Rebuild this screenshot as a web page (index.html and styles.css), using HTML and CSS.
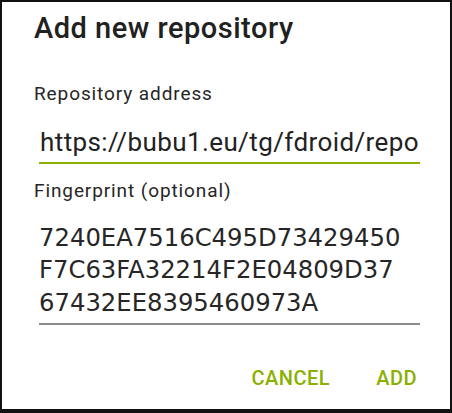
FILE: index.html
```html
<!DOCTYPE html>
<html>
<head>
<meta charset="utf-8">
<link rel="stylesheet" href="styles.css">
</head>
<body>
<div class="dialog">
  <h1 class="title">Add new repository</h1>
  <div class="label label-first">Repository address</div>
  <div class="field field-active">https://bubu1.eu/tg/fdroid/repo</div>
  <div class="label label-second">Fingerprint (optional)</div>
  <div class="field field-fp">7240EA7516C495D73429450<br>F7C63FA32214F2E04809D37<br>67432EE8395460973A</div>
  <div class="actions">
    <span class="btn">CANCEL</span>
    <span class="btn">ADD</span>
  </div>
</div>
</body>
</html>
```
FILE: styles.css
```css
html, body {
  margin: 0;
  padding: 0;
  background: #111111;
}
body {
  width: 452px;
  height: 413px;
  overflow: hidden;
}
.dialog {
  box-sizing: border-box;
  background: #ffffff;
  margin: 2px 2px 0 2px;
  height: 407px;
  padding: 10px 30px 0 32px;
  font-family: Roboto, "Liberation Sans", sans-serif;
  color: #212121;
}
.title {
  margin: 0;
  font-size: 29px;
  line-height: 32px;
  font-weight: 500;
  letter-spacing: 0.5px;
  color: #212121;
}
.label {
  font-size: 19px;
  line-height: 24px;
  letter-spacing: 0.9px;
  color: #262626;
}
.label-first {
  margin-top: 38px;
}
.label-second {
  margin-top: 15px;
}
.field {
  margin-left: 5px;
  white-space: nowrap;
}
.field-active {
  margin-top: 19.5px;
  font-size: 26px;
  line-height: 32px;
  letter-spacing: 0.4px;
  padding-left: 1px;
  padding-bottom: 4px;
  border-bottom: 2px solid #8ab000;
  color: #222222;
}
.field-fp {
  margin-top: 19.7px;
  font-family: "DejaVu Sans", sans-serif;
  font-size: 24.3px;
  line-height: 32.3px;
  padding-bottom: 4px;
  border-bottom: 2px solid #8c8c8c;
  color: #262626;
}
.actions {
  margin-top: 41px;
  display: flex;
  justify-content: flex-end;
  gap: 46px;
  padding-right: 3px;
}
.btn {
  font-size: 20px;
  line-height: 24px;
  font-weight: 500;
  letter-spacing: 0.5px;
  color: #8ab000;
}
```
